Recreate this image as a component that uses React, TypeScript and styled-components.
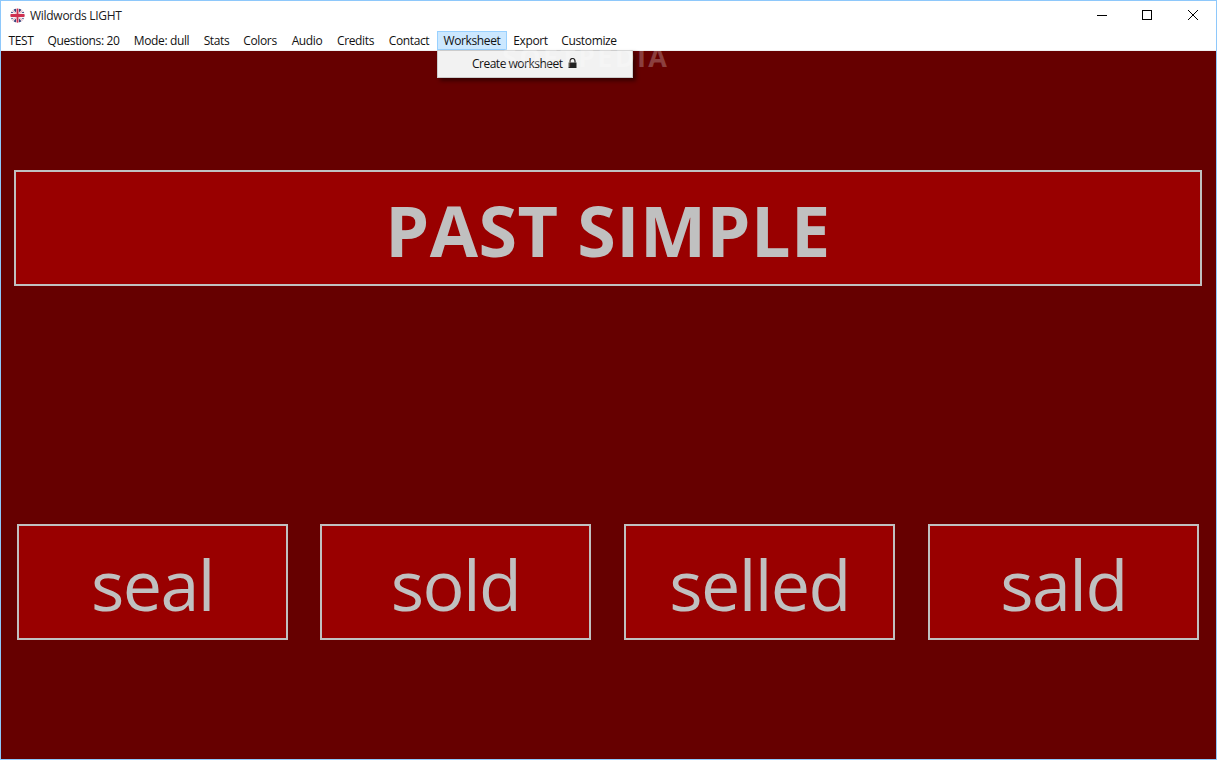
import React from "react";
import styled, { createGlobalStyle } from "styled-components";

const Global = createGlobalStyle`
  html, body { margin: 0; padding: 0; background: #fff; }
  * { box-sizing: border-box; }
`;

const FONT = `"Open Sans", "Noto Sans", "Liberation Sans", sans-serif`;

const Window = styled.div`
  position: relative;
  width: 1217px;
  height: 760px;
  display: flex;
  flex-direction: column;
  border: 1px solid #8ec8fb;
  font-family: ${FONT};
  overflow: hidden;
`;

const TitleBar = styled.div`
  height: 29px;
  display: flex;
  align-items: center;
  padding-left: 9px;
  background: #fff;
  flex: none;
`;

const AppTitle = styled.span`
  margin-left: 5px;
  font-size: 12px;
  letter-spacing: -0.28px;
  color: #1a1a1a;
`;

const WindowButtons = styled.div`
  margin-left: auto;
  display: flex;
  align-self: flex-start;
  height: 28px;
`;

const WindowButton = styled.div<{ $w: number }>`
  width: ${(p) => p.$w}px;
  display: flex;
  align-items: center;
  justify-content: center;
`;

const MenuBar = styled.div`
  height: 20px;
  display: flex;
  background: #fff;
  flex: none;
`;

const MenuItem = styled.div<{ $active?: boolean; $w: number }>`
  width: ${(p) => p.$w}px;
  height: 19px;
  margin-top: 1px;
  display: flex;
  align-items: center;
  justify-content: center;
  font-size: 12px;
  letter-spacing: -0.36px;
  color: #111;
  white-space: nowrap;
  background: ${(p) => (p.$active ? "#cce8ff" : "transparent")};
  border: 1px solid ${(p) => (p.$active ? "#99d1ff" : "transparent")};
`;

const Separator = styled.div`
  height: 1px;
  background: #f0f0f0;
  flex: none;
`;

const Stage = styled.main`
  flex: 1;
  background: #660000;
  display: flex;
  flex-direction: column;
  padding-top: 119px;
`;

const Heading = styled.div`
  height: 116px;
  margin: 0 14px 0 13px;
  padding-top: 4px;
  background: #990000;
  border: 2px solid #c0c0c0;
  display: flex;
  align-items: center;
  justify-content: center;
  color: #c0c0c0;
  font-size: 70px;
  font-weight: 700;
  letter-spacing: 0.5px;
  line-height: 1;
`;

const Answers = styled.div`
  margin-top: 238px;
  padding-left: 16px;
  display: grid;
  grid-template-columns: 303px 304px 304px 271px;
`;

const Answer = styled.div`
  width: 271px;
  height: 116px;
  padding-top: 4px;
  background: #990000;
  border: 2px solid #c0c0c0;
  display: flex;
  align-items: center;
  justify-content: center;
  color: #c0c0c0;
  font-size: 70px;
  letter-spacing: -1.6px;
  line-height: 1;
`;

const Dropdown = styled.div`
  position: absolute;
  left: 436px;
  top: 49px;
  width: 196px;
  height: 28px;
  padding: 0 0 2px 34px;
  background: #f2f2f2;
  border: 1px solid #ccc;
  box-shadow: 3px 3px 4px rgba(0, 0, 0, 0.45);
  display: flex;
  align-items: center;
  font-size: 12px;
  letter-spacing: -0.5px;
  color: #111;
  z-index: 2;
`;

const LockIcon = styled.svg`
  margin-left: 5px;
`;

const Watermark = styled.div`
  position: absolute;
  left: 501px;
  top: 42px;
  font-weight: 700;
  font-size: 27px;
  line-height: 1;
  letter-spacing: 2.3px;
  color: rgba(255, 255, 255, 0.25);
  z-index: 3;
  pointer-events: none;
`;

const FlagIcon = () => (
  <svg width="15" height="15" viewBox="0 0 16 16" aria-hidden="true">
    <defs>
      <clipPath id="flag-circle">
        <circle cx="8" cy="8" r="7.6" />
      </clipPath>
    </defs>
    <g clipPath="url(#flag-circle)">
      <rect width="16" height="16" fill="#f6f2f4" />
      <path d="M2 0 L6.4 0 L6.4 4.9 Z M9.6 0 L14 0 L9.6 4.9 Z M2 16 L6.4 16 L6.4 11.1 Z M9.6 16 L14 16 L9.6 11.1 Z" fill="#39457f" />
      <path d="M0 2.5 L0 5.2 L3.8 5.2 Z M16 2.5 L16 5.2 L12.2 5.2 Z M0 13.5 L0 10.8 L3.8 10.8 Z M16 13.5 L16 10.8 L12.2 10.8 Z" fill="#39457f" />
      <path d="M1 1 L6 5.5 M15 1 L10 5.5 M1 15 L6 10.5 M15 15 L10 10.5" stroke="#d98a9c" strokeWidth="0.8" />
      <rect x="7" width="2" height="16" fill="#cf3050" />
      <rect y="6.4" width="16" height="3.2" fill="#cf3050" />
    </g>
  </svg>
);

const items: { label: string; w: number; active?: boolean }[] = [
  { label: "TEST", w: 40 },
  { label: "Questions: 20", w: 85 },
  { label: "Mode: dull", w: 71 },
  { label: "Stats", w: 39 },
  { label: "Colors", w: 48 },
  { label: "Audio", w: 46 },
  { label: "Credits", w: 51 },
  { label: "Contact", w: 56 },
  { label: "Worksheet", w: 70, active: true },
  { label: "Export", w: 47 },
  { label: "Customize", w: 70 },
];

const answers = ["seal", "sold", "selled", "sald"];

export default function App() {
  return (
    <Window>
      <Global />
      <TitleBar>
        <FlagIcon />
        <AppTitle>Wildwords LIGHT</AppTitle>
        <WindowButtons>
          <WindowButton $w={44}>
            <svg width="10" height="10" viewBox="0 0 10 10" aria-hidden="true">
              <path d="M0 5.5H10" stroke="#000" strokeWidth="1" />
            </svg>
          </WindowButton>
          <WindowButton $w={46}>
            <svg width="10" height="10" viewBox="0 0 10 10" aria-hidden="true">
              <rect x="0.5" y="0.5" width="9" height="9" fill="none" stroke="#000" strokeWidth="1" />
            </svg>
          </WindowButton>
          <WindowButton $w={46}>
            <svg width="10" height="10" viewBox="0 0 10 10" aria-hidden="true">
              <path d="M0 0L10 10M10 0L0 10" stroke="#000" strokeWidth="1" />
            </svg>
          </WindowButton>
        </WindowButtons>
      </TitleBar>
      <MenuBar>
        {items.map((i) => (
          <MenuItem key={i.label} $active={i.active} $w={i.w}>
            {i.label}
          </MenuItem>
        ))}
      </MenuBar>
      <Separator />
      <Stage>
        <Heading>PAST SIMPLE</Heading>
        <Answers>
          {answers.map((a) => (
            <Answer key={a}>{a}</Answer>
          ))}
        </Answers>
      </Stage>
      <Dropdown>
        Create worksheet
        <LockIcon width="9" height="10" viewBox="0 0 9 10" aria-hidden="true">
          <path d="M2 4.5V3a2.5 2.5 0 0 1 5 0v1.5" fill="none" stroke="#222" strokeWidth="1.2" />
          <rect x="0.5" y="4.5" width="8" height="5.5" fill="#222" />
        </LockIcon>
      </Dropdown>
      <Watermark>SOFTPEDIA</Watermark>
    </Window>
  );
}
